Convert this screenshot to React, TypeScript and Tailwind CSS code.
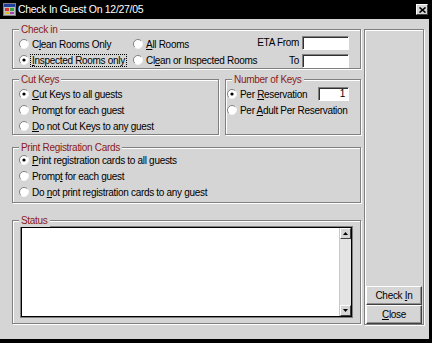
import React from "react";

const Radio = ({ checked = false }: { checked?: boolean }) => (
  <svg width="10" height="10" viewBox="0 0 10 10" className="shrink-0">
    <circle cx="5" cy="5" r="4.5" fill="#fff" />
    <path d="M8.2 1.8 A4.5 4.5 0 0 0 1.8 8.2" fill="none" stroke="#808080" strokeWidth="1" />
    <path d="M1.8 8.2 A4.5 4.5 0 0 0 8.2 1.8" fill="none" stroke="#f4f4f4" strokeWidth="1" />
    {checked && <circle cx="5" cy="5" r="1.6" fill="#000" />}
  </svg>
);

const U = ({ children }: { children: React.ReactNode }) => <span className="underline underline-offset-[1px]">{children}</span>;

const Opt = ({ checked, children, focus }: { checked?: boolean; children: React.ReactNode; focus?: boolean }) => (
  <div className="h-[16px] flex items-center whitespace-nowrap">
    <Radio checked={checked} />
    {focus ? (
      <span className="ml-[1px] border border-dotted border-black px-[1px] leading-[11px]">{children}</span>
    ) : (
      <span className="ml-[3px] leading-[13px]">{children}</span>
    )}
  </div>
);

const Legend = ({ children }: { children: React.ReactNode }) => (
  <span className="absolute left-[6px] top-[-7px] px-[2px] bg-[#d5d5d5] text-[#8a1a1a] leading-[13px] whitespace-nowrap">{children}</span>
);

const groupCls = "relative border border-[#808080] shadow-[1px_1px_0_#fff,inset_1px_1px_0_#fff]";
const fieldCls = "bg-white border border-t-[#808080] border-l-[#808080] border-b-white border-r-white shadow-[inset_1px_1px_0_#303030]";

export default function App() {
  return (
    <div className="w-[432px] h-[343px] bg-[#d5d5d5] border-r-[3px] border-b-[4px] border-black overflow-hidden font-['Liberation_Sans',Arial,sans-serif] text-[10px] tracking-[-0.3px] text-black">
      {/* title bar */}
      <div className="h-[19px] bg-black flex items-center pl-[3px] pr-[1px]">
        <svg width="13" height="13" viewBox="0 0 13 13" className="shrink-0">
          <rect x="0.5" y="0.5" width="12" height="12" fill="#c0c0c0" stroke="#808080" />
          <rect x="1" y="1" width="11" height="3" fill="#2040a0" />
          <rect x="2" y="5" width="4" height="3" fill="#e03030" />
          <rect x="7" y="5" width="4" height="3" fill="#30a040" />
          <rect x="2" y="9" width="4" height="2" fill="#e0c020" />
          <rect x="7" y="9" width="4" height="2" fill="#a040c0" />
        </svg>
        <span className="ml-[2px] text-white text-[10.5px] leading-[13px] whitespace-nowrap">Check In Guest On 12/27/05</span>
        <div className="ml-auto w-[12px] h-[11px] bg-[#d5d5d5] border border-t-white border-l-white border-b-[#404040] border-r-[#404040] flex items-center justify-center">
          <svg width="7" height="6" viewBox="0 0 7 6">
            <path d="M0.5 0.5 L6.5 5.5 M6.5 0.5 L0.5 5.5" stroke="#000" strokeWidth="1.6" />
          </svg>
        </div>
      </div>

      {/* body */}
      <div className="flex pl-[12px] pt-[10px]">
        {/* left column */}
        <div className="w-[350px] flex flex-col">
          {/* Check in */}
          <div className={`${groupCls} w-[349px] h-[40px] flex pl-[6px] pr-[12px]`}>
            <Legend>Check in</Legend>
            <div className="grid grid-cols-[114px_auto] pt-[6px]">
              <Opt>C<U>l</U>ean Rooms Only</Opt>
              <Opt><U>A</U>ll Rooms</Opt>
              <Opt checked focus><U>I</U>nspected Rooms only</Opt>
              <Opt>Cl<U>e</U>an or Inspected Rooms</Opt>
            </div>
            <div className="ml-auto flex flex-col gap-[3px] pt-[5px]">
              <div className="flex items-center justify-end gap-[3px]">
                <span className="whitespace-nowrap">ETA From</span>
                <div className={`${fieldCls} w-[47px] h-[14px]`} />
              </div>
              <div className="flex items-center justify-end gap-[3px]">
                <span>To</span>
                <div className={`${fieldCls} w-[47px] h-[14px]`} />
              </div>
            </div>
          </div>

          {/* Cut keys + Number of keys */}
          <div className="flex mt-[10px]">
            <div className={`${groupCls} w-[207px] h-[56px] pl-[6px] pt-[6px]`}>
              <Legend>Cut Keys</Legend>
              <Opt checked><U>C</U>ut Keys to all guests</Opt>
              <Opt>Prom<U>p</U>t for each guest</Opt>
              <Opt><U>D</U>o not Cut Keys to any guest</Opt>
            </div>
            <div className={`${groupCls} ml-[6px] w-[136px] h-[56px] pl-[1px] pt-[6px] pr-[11px]`}>
              <Legend>Number of Keys</Legend>
              <div className="flex items-center">
                <Opt checked>Per <U>R</U>eservation</Opt>
                <div className={`${fieldCls} ml-auto w-[31px] h-[14px] flex items-center justify-end pr-[3px] leading-[12px]`}>1</div>
              </div>
              <Opt>Per <U>A</U>dult Per Reservation</Opt>
            </div>
          </div>

          {/* Print Registration Cards */}
          <div className={`${groupCls} w-[349px] h-[56px] mt-[12px] pl-[6px] pt-[4px]`}>
            <Legend>Print Registration Cards</Legend>
            <Opt checked><U>P</U>rint registration cards to all guests</Opt>
            <Opt>Promp<U>t</U> for each guest</Opt>
            <Opt>Do <U>n</U>ot print registration cards to any guest</Opt>
          </div>

          {/* Status */}
          <div className={`${groupCls} w-[349px] h-[104px] mt-[17px] px-[7px] pt-[5px]`}>
            <Legend>Status</Legend>
            <div className="h-[92px] bg-white border border-[#808080] shadow-[inset_0_0_0_1px_#000] p-[1px] flex">
              <div className="flex-1" />
              <div className="w-[12px] flex flex-col bg-[#e4e4e4] border-l border-[#c8c8c8]">
                <div className="h-[11px] bg-[#d5d5d5] border border-t-white border-l-white border-b-[#404040] border-r-[#404040] flex items-center justify-center">
                  <svg width="5" height="3" viewBox="0 0 5 3"><path d="M2.5 0 L5 3 L0 3 Z" fill="#000" /></svg>
                </div>
                <div className="flex-1" />
                <div className="h-[11px] bg-[#d5d5d5] border border-t-white border-l-white border-b-[#404040] border-r-[#404040] flex items-center justify-center">
                  <svg width="5" height="3" viewBox="0 0 5 3"><path d="M0 0 L5 0 L2.5 3 Z" fill="#000" /></svg>
                </div>
              </div>
            </div>
          </div>
        </div>

        {/* right panel */}
        <div className={`${groupCls} ml-[2px] w-[60px] h-[296px] flex flex-col justify-end px-[1px]`}>
          <button className="h-[19px] w-full bg-[#d5d5d5] border border-t-white border-l-white border-b-[#404040] border-r-[#404040] shadow-[inset_-1px_-1px_0_#909090] leading-[13px]">
            Check <U>I</U>n
          </button>
          <button className="h-[19px] w-full bg-[#d5d5d5] border border-t-white border-l-white border-b-[#404040] border-r-[#404040] shadow-[inset_-1px_-1px_0_#909090] leading-[13px]">
            <U>C</U>lose
          </button>
        </div>
      </div>
    </div>
  );
}
